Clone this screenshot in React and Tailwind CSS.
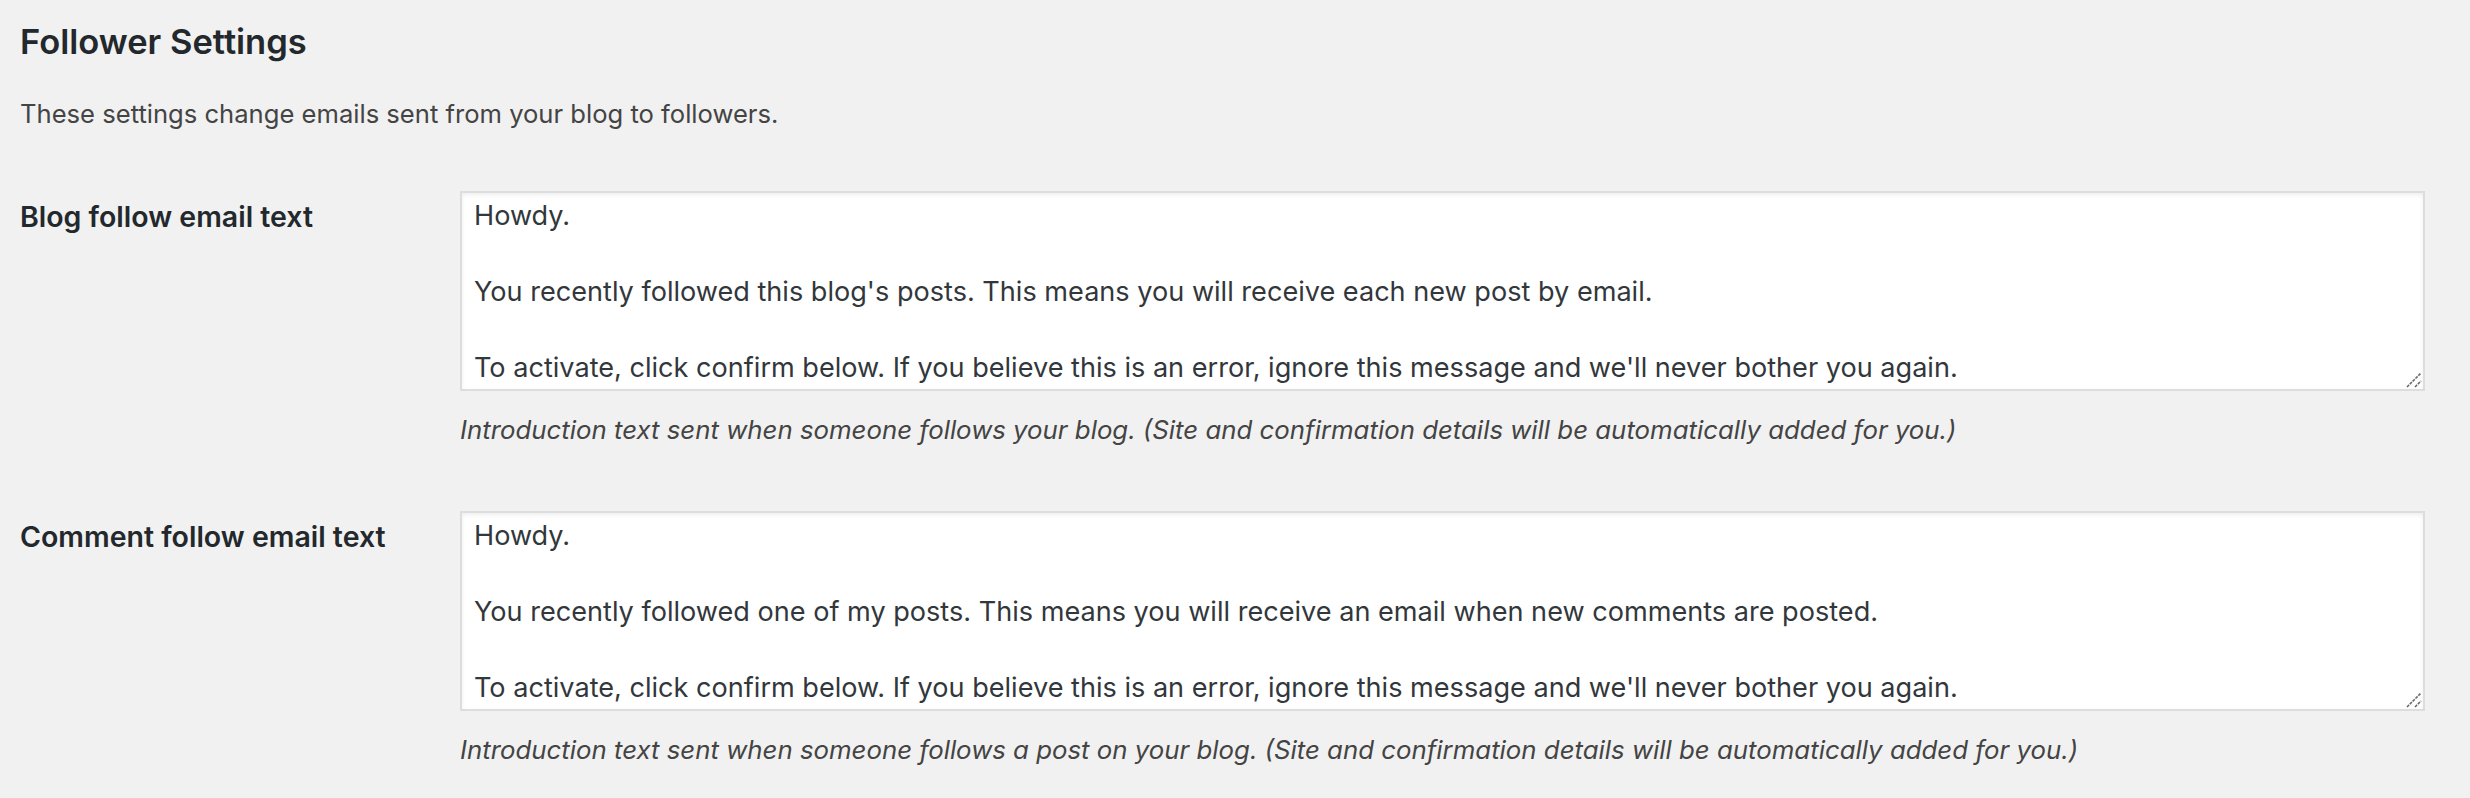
import React from 'react'

const rows = [
  {
    label: 'Blog follow email text',
    text: "Howdy.\n\nYou recently followed this blog's posts. This means you will receive each new post by email.\n\nTo activate, click confirm below. If you believe this is an error, ignore this message and we'll never bother you again.",
    help: 'Introduction text sent when someone follows your blog. (Site and confirmation details will be automatically added for you.)',
  },
  {
    label: 'Comment follow email text',
    text: "Howdy.\n\nYou recently followed one of my posts. This means you will receive an email when new comments are posted.\n\nTo activate, click confirm below. If you believe this is an error, ignore this message and we'll never bother you again.",
    help: 'Introduction text sent when someone follows a post on your blog. (Site and confirmation details will be automatically added for you.)',
  },
]

function ResizeHandle() {
  return (
    <svg
      className="absolute right-[3px] bottom-[3px] pointer-events-none"
      width="16"
      height="16"
      viewBox="0 0 16 16"
    >
      <path d="M1 15 L15 1" stroke="#6b6b6b" strokeWidth="1.6" strokeDasharray="3 1" />
      <path d="M9 15 L15 9" stroke="#6b6b6b" strokeWidth="1.6" strokeDasharray="3 1" />
    </svg>
  )
}

function SettingRow({ row, first }) {
  return (
    <div className={`flex ${first ? 'mt-[59px]' : 'mt-[63px]'}`}>
      <div className="w-[440px] shrink-0 pt-[7px] text-[28.5px] leading-[38px] font-semibold text-[#23282d]">
        {row.label}
      </div>
      <div className="flex flex-col">
        <div className="relative w-[1965px] h-[200px]">
          <textarea
            readOnly
            defaultValue={row.text}
            className="block w-full h-full resize-none overflow-hidden bg-white border-2 border-[#dddddd] shadow-[inset_0_2px_4px_rgba(0,0,0,0.07)] pl-[12px] pr-[12px] pt-[4px] pb-[2px] text-[27.1px] leading-[38px] text-[#32373c] outline-none"
          />
          <ResizeHandle />
        </div>
        <p className="mt-[21px] text-[25.8px] leading-[36px] italic text-[#444444]">
          {row.help}
        </p>
      </div>
    </div>
  )
}

export default function App() {
  return (
    <div className="min-h-screen bg-[#f1f1f1] pl-[20px] pt-[22px] font-['Inter',sans-serif]">
      <h2 className="text-[34.5px] leading-[40px] font-semibold text-[#23282d]">
        Follower Settings
      </h2>
      <p className="mt-[34px] text-[25.6px] leading-[36px] text-[#444444]">
        These settings change emails sent from your blog to followers.
      </p>
      {rows.map((row, i) => (
        <SettingRow key={i} row={row} first={i === 0} />
      ))}
    </div>
  )
}
